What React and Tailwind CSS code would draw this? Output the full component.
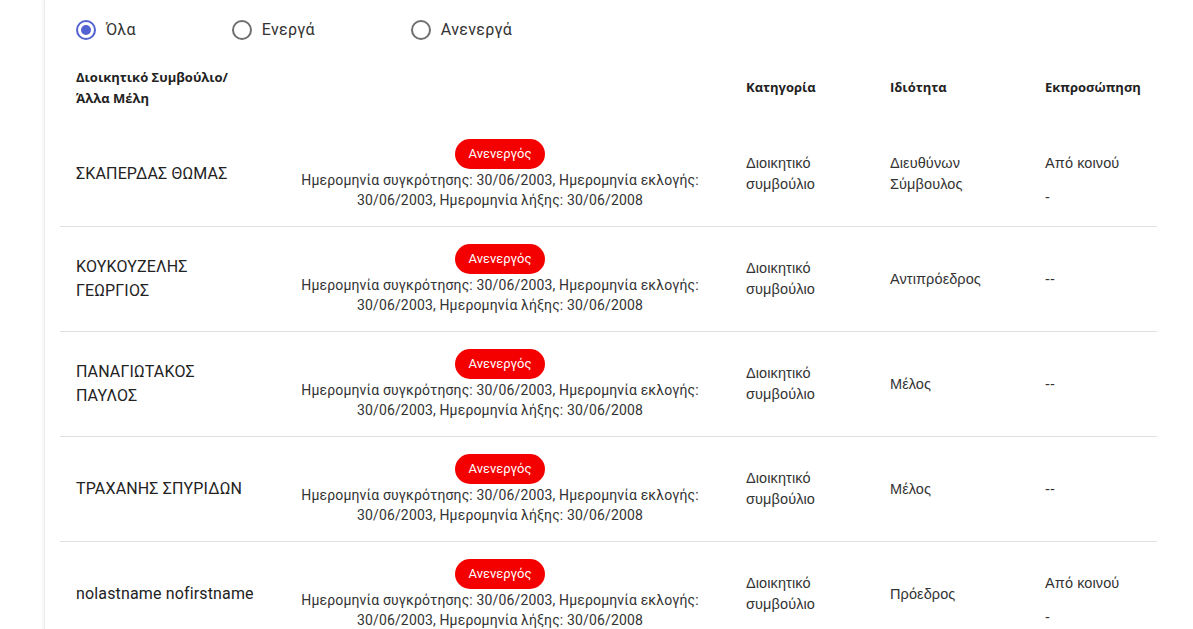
import { useState } from 'react';

const rows = [
  { name: 'ΣΚΑΠΕΡΔΑΣ ΘΩΜΑΣ', role: 'Διευθύνων Σύμβουλος', rep: 'joint' },
  { name: 'ΚΟΥΚΟΥΖΕΛΗΣ ΓΕΩΡΓΙΟΣ', role: 'Αντιπρόεδρος', rep: 'none' },
  { name: 'ΠΑΝΑΓΙΩΤΑΚΟΣ ΠΑΥΛΟΣ', role: 'Μέλος', rep: 'none' },
  { name: 'ΤΡΑΧΑΝΗΣ ΣΠΥΡΙΔΩΝ', role: 'Μέλος', rep: 'none' },
  { name: 'nolastname nofirstname', role: 'Πρόεδρος', rep: 'joint' },
];

const filters = ['Όλα', 'Ενεργά', 'Ανενεργά'];

const Radio = ({ label, checked, onClick }) => (
  <button onClick={onClick} className="flex items-center gap-[10px] cursor-pointer">
    <span
      className={`w-5 h-5 rounded-full border-2 flex items-center justify-center ${
        checked ? 'border-[#5262d0]' : 'border-[#6f6f6f]'
      }`}
    >
      {checked && <span className="w-[10px] h-[10px] rounded-full bg-[#5262d0]" />}
    </span>
    <span className="text-base tracking-[0.3px] text-[#333] font-['Roboto',sans-serif]">{label}</span>
  </button>
);

const App = () => {
  const [filter, setFilter] = useState(0);

  return (
    <div className="min-h-screen bg-white">
      <div className="ml-[44px] min-h-screen border-l border-[#ececec] shadow-[-2px_0_3px_rgba(0,0,0,0.04)] pl-[15px] pr-[36px]">
        {/* Filter radios */}
        <div className="h-[59px] flex items-center gap-[96px] pl-4">
          {filters.map((f, i) => (
            <Radio key={f} label={f} checked={filter === i} onClick={() => setFilter(i)} />
          ))}
        </div>

        {/* Table header */}
        <div className="grid grid-cols-[210px_460px_144px_155px_128px] h-[63px] pb-[6px] items-center font-['Open_Sans',sans-serif] text-[13px] font-bold text-[#222] leading-[21px]">
          <div className="px-4">Διοικητικό Συμβούλιο/ Άλλα Μέλη</div>
          <div />
          <div className="px-4">Κατηγορία</div>
          <div className="px-4">Ιδιότητα</div>
          <div className="px-4">Εκπροσώπηση</div>
        </div>

        {/* Rows */}
        {rows.map((r) => (
          <div
            key={r.name}
            className="grid grid-cols-[210px_460px_144px_155px_128px] h-[105px] items-center border-b border-[#e0e0e0]"
          >
            <div className="px-4 font-['Roboto',sans-serif] text-base tracking-[0.15px] leading-6 text-[#222]">{r.name}</div>
            <div className="px-4 flex flex-col items-center text-center font-['Roboto',sans-serif]">
              <span className="h-[30px] px-[14px] rounded-full bg-[#f50000] text-white text-[13px] flex items-center">
                Ανενεργός
              </span>
              <p className="text-sm tracking-[0.15px] leading-[20px] text-[#333] mt-[1px]">
                Ημερομηνία συγκρότησης: 30/06/2003, Ημερομηνία εκλογής: 30/06/2003, Ημερομηνία λήξης: 30/06/2008
              </p>
            </div>
            <div className="px-4 font-['Liberation_Sans',Arial,sans-serif] text-[14.5px] tracking-[0.1px] leading-[21px] text-[#333]">
              Διοικητικό συμβούλιο
            </div>
            <div className="px-4 font-['Liberation_Sans',Arial,sans-serif] text-[14.5px] tracking-[0.1px] leading-[21px] text-[#333]">
              {r.role}
            </div>
            <div className="px-4 font-['Liberation_Sans',Arial,sans-serif] text-[14.5px] tracking-[0.1px] leading-[21px] text-[#333]">
              {r.rep === 'joint' ? (
                <div className="flex flex-col -mb-[13px]">
                  <span>Από κοινού</span>
                  <span className="mt-[13px]">-</span>
                </div>
              ) : (
                <span>--</span>
              )}
            </div>
          </div>
        ))}
      </div>
    </div>
  );
};

export default App;
